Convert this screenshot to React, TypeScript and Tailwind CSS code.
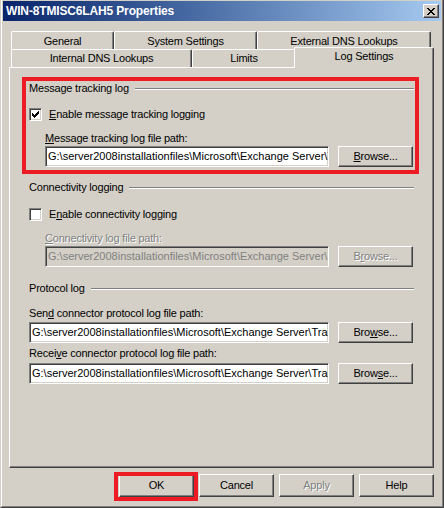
import React from "react";

const MSG_PATH =
  "G:\\server2008installationfiles\\Microsoft\\Exchange Server\\TransportRoles\\Logs\\MessageTracking";
const CONN_PATH =
  "G:\\server2008installationfiles\\Microsoft\\Exchange Server\\TransportRoles\\Logs\\Connectivity";
const SEND_PATH =
  "G:\\server2008installationfiles\\Microsoft\\Exchange Server\\TransportRoles\\Logs\\ProtocolLog\\SmtpSend";
const RECV_PATH =
  "G:\\server2008installationfiles\\Microsoft\\Exchange Server\\TransportRoles\\Logs\\ProtocolLog\\SmtpReceive";

const U = ({ children }: { children: React.ReactNode }) => (
  <span className="underline">{children}</span>
);

const Button = ({
  children,
  disabled,
  className = "",
}: {
  children: React.ReactNode;
  disabled?: boolean;
  className?: string;
}) => (
  <div
    className={`flex w-[75px] shrink-0 items-center justify-center border border-white border-r-[#404040] border-b-[#404040] shadow-[inset_-1px_-1px_0_#808080] ${
      disabled ? "text-[#808080] [text-shadow:1px_1px_0_#fff]" : "text-black"
    } ${className}`}
  >
    {children}
  </div>
);

const Field = ({
  value,
  disabled,
  className = "",
}: {
  value: string;
  disabled?: boolean;
  className?: string;
}) => (
  <div
    className={`h-[21px] shrink-0 overflow-hidden whitespace-nowrap border border-[#808080] border-r-white border-b-white pl-[2px] leading-[19px] tracking-normal shadow-[inset_1px_1px_0_#404040,inset_-1px_-1px_0_#d4d0c8] ${
      disabled ? "bg-[#d4d0c8] text-[#808080]" : "bg-white text-black"
    } ${className}`}
  >
    <span className="block overflow-hidden">{value}</span>
  </div>
);

const CheckBox = ({ checked }: { checked?: boolean }) => (
  <div className="flex h-[13px] w-[13px] shrink-0 items-center justify-center border border-[#808080] border-r-white border-b-white bg-white shadow-[inset_1px_1px_0_#404040,inset_-1px_-1px_0_#d4d0c8]">
    {checked && (
      <svg width="7" height="7" viewBox="0 0 7 7" shapeRendering="crispEdges">
        {[2, 3, 4, 3, 2, 1, 0].map((y, x) => (
          <rect key={x} x={x} y={y} width="1" height="3" fill="#000" />
        ))}
      </svg>
    )}
  </div>
);

const GroupHeader = ({ label }: { label: string }) => (
  <div className="flex h-[13px] items-center gap-[6px]">
    <span className="whitespace-nowrap">{label}</span>
    <div className="h-[2px] flex-1 border-t border-t-[#808080] border-b border-b-white" />
  </div>
);

const Tab = ({
  label,
  className = "",
}: {
  label: string;
  className?: string;
}) => (
  <div
    className={`flex h-[18px] justify-center rounded-t-[2px] border-t border-l border-r border-white border-r-[#404040] shadow-[inset_-1px_0_0_#808080] ${className}`}
  >
    {label}
  </div>
);

const CloseGlyph = () => (
  <svg width="8" height="7" viewBox="0 0 8 7" shapeRendering="crispEdges">
    {[
      [0, 0], [1, 0], [6, 0], [7, 0],
      [1, 1], [2, 1], [5, 1], [6, 1],
      [2, 2], [3, 2], [4, 2], [5, 2],
      [3, 3], [4, 3],
      [2, 4], [3, 4], [4, 4], [5, 4],
      [1, 5], [2, 5], [5, 5], [6, 5],
      [0, 6], [1, 6], [6, 6], [7, 6],
    ].map(([x, y]) => (
      <rect key={`${x}-${y}`} x={x} y={y} width="1" height="1" fill="#000" />
    ))}
  </svg>
);

export default function App() {
  return (
    <div className="h-[508px] w-[444px] overflow-hidden bg-[#d4d0c8] font-['Liberation_Sans',Arial,sans-serif] text-[11px] leading-[13px] tracking-[-0.2px] text-black">
      <div className="h-full border-r border-b border-l border-r-[#404040] border-b-[#404040] border-l-[#d4d0c8]">
        <div className="flex h-full flex-col border-r border-b border-l border-r-[#808080] border-b-[#808080] border-l-white px-[1px] pt-[1px]">
          {/* title bar */}
          <div className="flex h-[20px] shrink-0 items-center justify-between bg-linear-to-r from-[#0a246a] to-[#a6caf0] pr-[2px] pl-[3px]">
            <span className="pt-[1px] text-[12px] font-bold tracking-[-0.15px] text-white">
              WIN-8TMISC6LAH5 Properties
            </span>
            <div className="flex h-[14px] w-[16px] items-center justify-center border border-white border-r-[#404040] border-b-[#404040] bg-[#d4d0c8] shadow-[inset_-1px_-1px_0_#808080]">
              <CloseGlyph />
            </div>
          </div>

          <div className="ml-[6px] w-[425px]">
            {/* tabs */}
            <div className="mt-[10px] ml-[2px] flex">
              <Tab label="General" className="w-[103px] pt-[3px]" />
              <Tab label="System Settings" className="w-[143px] pt-[3px]" />
              <Tab label="External DNS Lookups" className="w-[174px] pt-[3px]" />
            </div>
            <div className="ml-[2px] flex h-[18px]">
              <Tab label="Internal DNS Lookups" className="w-[181px] pt-[2px]" />
              <Tab label="Limits" className="w-[104px] pt-[2px]" />
              <div className="relative z-10 -mt-[2px] -ml-[2px] flex h-[21px] w-[140px] justify-center rounded-t-[2px] border-t border-l border-r border-white border-r-[#404040] bg-[#d4d0c8] pt-[2px] shadow-[inset_-1px_0_0_#808080]">
                Log Settings
              </div>
            </div>

            {/* panel */}
            <div className="h-[401px] border border-white border-r-[#404040] border-b-[#404040] shadow-[inset_-1px_-1px_0_#808080]">
              <div className="mt-[9px] ml-[12px] h-[97px] w-[397px] border-[4px] border-[#ed1c24]">
                <div className="mt-[1px] pr-[1px] pl-[3px]">
                  <GroupHeader label="Message tracking log" />
                </div>
                <div className="mt-[13px] flex h-[13px] items-center pl-[3px]">
                  <CheckBox checked />
                  <span className="ml-[7px]">
                    <U>E</U>nable message tracking logging
                  </span>
                </div>
                <div className="mt-[11px] pl-[19px]">
                  <U>M</U>essage tracking log file path:
                </div>
                <div className="mt-[1px] flex gap-[9px] pl-[19px]">
                  <Field value={MSG_PATH} className="w-[284px]" />
                  <Button className="h-[21px]">
                    <span>
                      <U>B</U>rowse...
                    </span>
                  </Button>
                </div>
              </div>

              <div className="ml-[19px] w-[385px]">
                <div className="mt-[7px]">
                  <GroupHeader label="Connectivity logging" />
                </div>
                <div className="mt-[14px] flex h-[13px] items-center">
                  <CheckBox />
                  <span className="ml-[7px]">
                    E<U>n</U>able connectivity logging
                  </span>
                </div>
                <div className="mt-[11px] pl-[16px] text-[#808080] [text-shadow:1px_1px_0_#fff]">
                  <U>C</U>onnectivity log file path:
                </div>
                <div className="mt-[1px] flex gap-[9px] pl-[16px]">
                  <Field value={CONN_PATH} disabled className="w-[284px]" />
                  <Button disabled className="h-[21px]">
                    <span>
                      B<U>r</U>owse...
                    </span>
                  </Button>
                </div>

                <div className="mt-[15px]">
                  <GroupHeader label="Protocol log" />
                </div>
                <div className="mt-[12px]">
                  Sen<U>d</U> connector protocol log file path:
                </div>
                <div className="mt-[2px] flex gap-[9px]">
                  <Field value={SEND_PATH} className="w-[300px]" />
                  <Button className="h-[21px]">
                    <span>
                      Bro<U>w</U>se...
                    </span>
                  </Button>
                </div>
                <div className="mt-[4px]">
                  Recei<U>v</U>e connector protocol log file path:
                </div>
                <div className="mt-[3px] flex gap-[9px]">
                  <Field value={RECV_PATH} className="w-[300px]" />
                  <Button className="h-[21px]">
                    <span>
                      Brow<U>s</U>e...
                    </span>
                  </Button>
                </div>
              </div>
            </div>

            {/* dialog buttons */}
            <div className="mt-[6px] flex justify-end gap-[5px]">
              <div className="relative">
                <Button className="h-[23px]">OK</Button>
                <div className="absolute -top-[2px] -right-[4px] -bottom-[4px] -left-[5px] border-[4px] border-[#ed1c24]" />
              </div>
              <Button className="h-[23px]">Cancel</Button>
              <Button disabled className="h-[23px]">
                Apply
              </Button>
              <Button className="h-[23px]">Help</Button>
            </div>
          </div>
        </div>
      </div>
    </div>
  );
}
